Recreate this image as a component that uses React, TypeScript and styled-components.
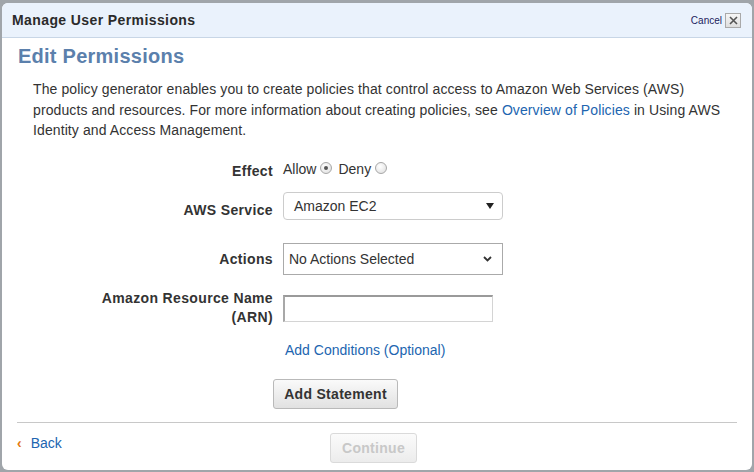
import styled, { createGlobalStyle } from 'styled-components'

const GlobalStyle = createGlobalStyle`
    html, body {
        margin: 0;
        padding: 0;
        background: #a0a5aa;
        font-family: "Liberation Sans", Arial, sans-serif;
    }
    #root {
        width: 754px;
        height: 472px;
        overflow: hidden;
    }
`

const Dialog = styled.div`
    margin: 3px 2px 0 2px;
    width: 750px;
    height: 467px;
    background: #ffffff;
    border-radius: 6px;
    overflow: hidden;
    display: flex;
    flex-direction: column;
`

const Header = styled.div`
    height: 34px;
    flex-shrink: 0;
    background: #eaf2fc;
    border-bottom: 1px solid #c8d6e6;
    display: flex;
    align-items: center;
    justify-content: space-between;
    padding: 0 11px 0 10px;
`

const Title = styled.div`
    font-size: 14px;
    font-weight: bold;
    letter-spacing: 0.4px;
    color: #2b2b2b;
`

const CancelWrap = styled.div`
    display: flex;
    align-items: center;
    gap: 3px;
`

const CancelText = styled.span`
    font-size: 10px;
    color: #1c1c5c;
`

const CloseBox = styled.span`
    width: 14px;
    height: 13px;
    border: 1px solid #a9a9a9;
    background: linear-gradient(#f6f6f6, #dedede);
    display: flex;
    align-items: center;
    justify-content: center;
`

const Body = styled.div`
    padding: 7px 0 0 15px;
    display: flex;
    flex-direction: column;
`

const Heading = styled.h2`
    margin: 0 0 0 1px;
    font-size: 20px;
    line-height: 22px;
    font-weight: bold;
    letter-spacing: 0.25px;
    color: #5b80ac;
`

const Intro = styled.p`
    margin: 12px 0 0 16px;
    width: 700px;
    font-size: 14px;
    line-height: 20.5px;
    letter-spacing: 0.1px;
    color: #333;
`

const Link = styled.a`
    color: #2165b0;
    text-decoration: none;
    cursor: pointer;
`

const Form = styled.div`
    display: grid;
    grid-template-columns: 256px 1fr;
    column-gap: 10px;
    margin-top: 20px;
`

const Label = styled.div<{ $top?: number }>`
    justify-self: end;
    text-align: right;
    font-size: 14px;
    font-weight: bold;
    letter-spacing: 0.35px;
    color: #333;
    line-height: 19px;
    padding-top: ${p => p.$top ?? 0}px;
`

const Field = styled.div<{ $mb?: number; $top?: number }>`
    display: flex;
    align-items: ${p => (p.$top ? 'flex-start' : 'center')};
    padding-top: ${p => p.$top ?? 0}px;
    margin-bottom: ${p => p.$mb ?? 0}px;
    font-size: 14px;
    color: #333;
`

const RadioLabel = styled.span`
    margin-right: 4px;
`

const Radio = styled.span<{ $checked?: boolean }>`
    width: 10px;
    height: 10px;
    border-radius: 50%;
    border: 1px solid #a7a7a7;
    background: radial-gradient(circle at 40% 35%, #ffffff, #dcdcdc);
    margin-right: 6px;
    margin-top: -2px;
    display: flex;
    align-items: center;
    justify-content: center;
    &::after {
        content: "";
        display: ${p => (p.$checked ? 'block' : 'none')};
        width: 4px;
        height: 4px;
        border-radius: 50%;
        background: #555;
    }
`

const Select = styled.div<{ $w: number; $h: number; $rounded?: boolean; $pad: number }>`
    width: ${p => p.$w}px;
    height: ${p => p.$h}px;
    box-sizing: border-box;
    border: 1px solid ${p => (p.$rounded ? '#cccccc' : '#aaaaaa')};
    border-radius: ${p => (p.$rounded ? 4 : 0)}px;
    background: #fff;
    display: flex;
    align-items: center;
    justify-content: space-between;
    padding: 0 ${p => (p.$rounded ? 8 : 10)}px 0 ${p => p.$pad}px;
    font-size: 14px;
    color: #333;
`

const ArnInput = styled.div`
    width: 210px;
    height: 27px;
    box-sizing: border-box;
    border: 1px solid #d4d4d4;
    border-top: 2px solid #9a9a9a;
    border-left: 2px solid #a8a8a8;
    background: #fff;
`

const Actions = styled.div`
    display: flex;
    flex-direction: column;
    align-items: flex-start;
    padding-left: 256px;
`

const Button = styled.button<{ $disabled?: boolean }>`
    height: 30px;
    padding: 0 10px;
    font-family: "Liberation Sans", Arial, sans-serif;
    font-size: 14px;
    font-weight: bold;
    letter-spacing: 0.3px;
    color: ${p => (p.$disabled ? '#c8c8c8' : '#333')};
    background: ${p => (p.$disabled ? 'linear-gradient(#fbfbfb, #ececec)' : 'linear-gradient(#fafafa, #e1e1e1)')};
    border: 1px solid ${p => (p.$disabled ? '#dadada' : '#b9b9b9')};
    border-radius: 3px;
    cursor: pointer;
`

const AddStatement = styled(Button)`
    margin-top: 21px;
    width: 125px;
`

const ConditionsLink = styled(Link)`
    font-size: 14px;
    line-height: 16px;
    margin: 15px 0 0 12px;
`

const Divider = styled.div`
    margin: 13px 0 0 0;
    width: 720px;
    height: 1px;
    background: #c8c8c8;
`

const Footer = styled.div`
    margin: 10px 0 0 0;
    width: 720px;
    display: grid;
    grid-template-columns: 1fr auto 1fr;
    align-items: start;
`

const BackLink = styled(Link)`
    display: flex;
    align-items: center;
    gap: 9px;
    font-size: 14px;
    margin-top: 2px;
`

const Chevron = styled.span`
    color: #e47911;
    font-weight: bold;
    font-size: 14px;
`

const Continue = styled(Button)`
    width: 87px;
    margin-left: -7px;
`

const App = () => {
    return (
        <>
            <GlobalStyle />
            <Dialog>
                <Header>
                    <Title>Manage User Permissions</Title>
                    <CancelWrap>
                        <CancelText>Cancel</CancelText>
                        <CloseBox>
                            <svg width="9" height="9" viewBox="0 0 9 9">
                                <path d="M1 1 L8 8 M8 1 L1 8" stroke="#555" strokeWidth="1.6" />
                            </svg>
                        </CloseBox>
                    </CancelWrap>
                </Header>
                <Body>
                    <Heading>Edit Permissions</Heading>
                    <Intro>
                        The policy generator enables you to create policies that control access to Amazon Web Services (AWS)<br />
                        products and resources. For more information about creating policies, see{' '}
                        <Link>Overview of Policies</Link> in Using AWS<br />
                        Identity and Access Management.
                    </Intro>
                    <Form>
                        <Label $top={1}>Effect</Label>
                        <Field $mb={15}>
                            <RadioLabel>Allow</RadioLabel>
                            <Radio $checked />
                            <RadioLabel>Deny</RadioLabel>
                            <Radio />
                        </Field>

                        <Label $top={9}>AWS Service</Label>
                        <Field $mb={23}>
                            <Select $w={220} $h={28} $rounded $pad={10}>
                                <span>Amazon EC2</span>
                                <svg width="8" height="6" viewBox="0 0 8 6">
                                    <path d="M0 0 L8 0 L4 6 Z" fill="#222" />
                                </svg>
                            </Select>
                        </Field>

                        <Label $top={7}>Actions</Label>
                        <Field $mb={14}>
                            <Select $w={220} $h={32} $pad={5}>
                                <span>No Actions Selected</span>
                                <svg width="9" height="6" viewBox="0 0 9 6">
                                    <path d="M1 1 L4.5 4.5 L8 1" stroke="#333" strokeWidth="1.8" fill="none" />
                                </svg>
                            </Select>
                        </Field>

                        <Label>Amazon Resource Name<br />(ARN)</Label>
                        <Field $top={6}>
                            <ArnInput />
                        </Field>
                    </Form>
                    <Actions>
                        <ConditionsLink>Add Conditions (Optional)</ConditionsLink>
                        <AddStatement>Add Statement</AddStatement>
                    </Actions>
                    <Divider />
                    <Footer>
                        <BackLink>
                            <Chevron>‹</Chevron>
                            Back
                        </BackLink>
                        <Continue $disabled>Continue</Continue>
                        <span />
                    </Footer>
                </Body>
            </Dialog>
        </>
    )
}

export default App
